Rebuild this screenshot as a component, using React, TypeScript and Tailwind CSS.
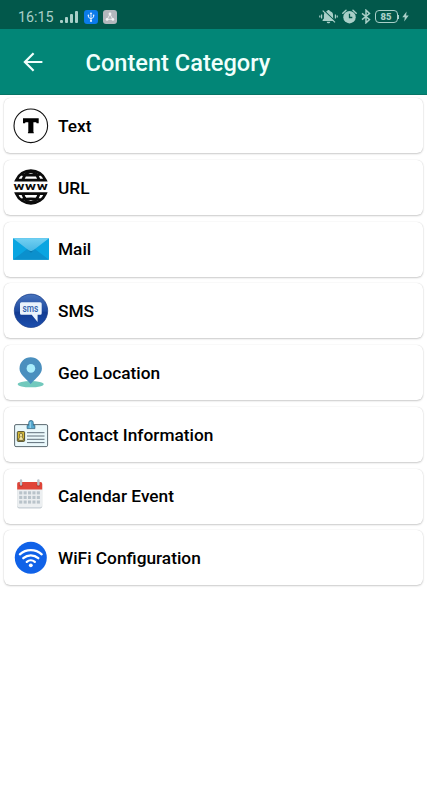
import type { ReactNode } from "react";
import { clsx } from "clsx";

const TextIcon = () => (
    <svg viewBox="0 0 36 36" className="h-9 w-9">
        <circle cx="17.8" cy="17.8" r="16.8" fill="#fff" stroke="#111" strokeWidth="1.1" />
        <path d="M10 10.3h15.700v4.900h-2.100l-.4-.900h-2.800v9.800l.4.300v.9h-5.900v-.9l.4-.300v-9.800h-2.800l-.4.900H10z" fill="#000" />
    </svg>
);

const UrlIcon = () => (
    <svg viewBox="0 0 36 36" className="h-9 w-9">
        <g fill="none" stroke="#0b0b0b" strokeWidth="2.8">
            <path d="M3.300 11.200a15.900 15.900 0 0 1 29.200 0z" />
            <path d="M9.600 11.200C11.600 5.500 14.500 2.600 17.900 2.600s6.300 2.900 8.300 8.600M8.500 5.400c6.200 1 12.600 1 18.800 0" />
            <path d="M3.300 24.700a15.900 15.900 0 0 0 29.200 0z" />
            <path d="M9.600 24.700c2 5.700 4.900 8.700 8.300 8.700s6.300-3 8.300-8.700M8.500 30.600c6.200-1 12.600-1 18.800 0" />
        </g>
        <text
            x="0.6"
            y="20.9"
            textLength="34.6"
            lengthAdjust="spacingAndGlyphs"
            fontSize="10.5"
            fontWeight="700"
            letterSpacing="0.4"
            fill="#0b0b0b"
            className="font-[Roboto,sans-serif]"
        >
            www
        </text>
    </svg>
);

const MailIcon = () => (
    <svg viewBox="0 0 36 36" className="h-9 w-9">
        <defs>
            <linearGradient id="mailFlap" x1="0" y1="0" x2="0" y2="1">
                <stop offset="0" stopColor="#72d0f2" />
                <stop offset="1" stopColor="#46b6e4" />
            </linearGradient>
        </defs>
        <path d="M0 7.3h36v21.500H0z" fill="#0aa5e1" />
        <path d="M0 28.800 18 15l18 13.800z" fill="#0b90cd" />
        <path d="M0 7.300h36L20 19.400q-2 1.600-4 0z" fill="url(#mailFlap)" />
        <path d="M14.400 18.200 16 19.400q2 1.600 4 0l1.600-1.200-3.600 3.600z" fill="#0876ad" />
    </svg>
);

const SmsIcon = () => (
    <svg viewBox="0 0 36 36" className="h-9 w-9">
        <defs>
            <linearGradient id="smsBall" x1="0" y1="0" x2="0" y2="1">
                <stop offset="0" stopColor="#4874bd" />
                <stop offset="0.5" stopColor="#1e4aa0" />
                <stop offset="0.55" stopColor="#123b92" />
                <stop offset="1" stopColor="#1c4fae" />
            </linearGradient>
        </defs>
        <circle cx="18" cy="17.8" r="16.7" fill="url(#smsBall)" stroke="#153a86" strokeWidth="0.7" />
        <path d="M8.5 9.3h18.700q1.500 0 1.500 1.500v9.400q0 1.500-1.500 1.500h-2.600v7.300l-5.900-7.300H8.500q-1.500 0-1.500-1.500v-9.400q0-1.500 1.500-1.500z" fill="#eaf3fc" />
        <text
            x="9.4"
            y="18.8"
            textLength="15.8"
            lengthAdjust="spacingAndGlyphs"
            fontSize="10.5"
            fill="#2f5fac"
            className="font-[Roboto,sans-serif] font-medium"
        >
            sms
        </text>
    </svg>
);

const GeoIcon = () => (
    <svg viewBox="0 0 36 36" className="h-9 w-9">
        <ellipse cx="17.7" cy="29.2" rx="13" ry="3.1" fill="#72c9bd" />
        <path d="M17.7 2.3a11.200 11.200 0 0 1 11.200 11.200c0 5.500-5 8.800-11.200 15.400C11.500 22.300 6.500 19 6.500 13.500A11.200 11.200 0 0 1 17.700 2.300z" fill="#4a8fbe" />
        <circle cx="17.9" cy="13.4" r="4.3" fill="#a9edfb" />
    </svg>
);

const ContactIcon = () => (
    <svg viewBox="0 0 36 36" className="h-9 w-9">
        <rect x="1.6" y="8.6" width="33" height="22" rx="1.4" fill="#eaf8fb" stroke="#4c5a62" strokeWidth="0.9" />
        <path d="M14.100 12.600v-3.200h1.600V6.700a2.300 2.300 0 0 1 4.600 0v2.700h1.600v3.200z" fill="#55a9d0" stroke="#28607e" strokeWidth="0.7" />
        <path d="M17.200 6v6" stroke="#b5e4f5" strokeWidth="0.9" />
        <rect x="4.3" y="15.6" width="7.3" height="9.8" rx="0.8" fill="#d5b936" stroke="#413d22" strokeWidth="0.9" />
        <path d="M5.600 24.400c0-2.500 1-3 1.500-3.300-1.200-2.500-.3-4 .9-4s2.100 1.500.9 4c.5.300 1.500.800 1.500 3.300z" fill="#f6e7a0" stroke="#413d22" strokeWidth="0.7" />
        <path d="M14 16.700h17.500M14 20h17.500M14 23.300h17.500M14 26.600h17.500" stroke="#50606b" strokeWidth="0.9" />
    </svg>
);

const CALENDAR_COLS = [6.2, 10.6, 15, 19.4, 23.8];
const CALENDAR_ROWS = [14.9, 19.5, 24.1];

const CalendarIcon = () => (
    <svg viewBox="0 0 36 36" className="h-9 w-9">
        <rect x="4.2" y="4" width="25" height="26.4" rx="1.8" fill="#c5cdd3" />
        <rect x="4.2" y="4" width="25" height="25.3" rx="1.8" fill="#eceff1" />
        <path d="M4.200 11.400V5.800Q4.200 4 6 4h21.400q1.800 0 1.800 1.800v5.600z" fill="#e04438" />
        {CALENDAR_ROWS.map((y) =>
            CALENDAR_COLS.map((x) => (
                <rect key={`${x}-${y}`} x={x} y={y - 1.6} width="3.1" height="3.1" fill="#b9c3ca" />
            ))
        )}
        <circle cx="8" cy="6.8" r="1.9" fill="#b83229" />
        <circle cx="25.4" cy="6.8" r="1.9" fill="#b83229" />
        <rect x="6.8" y="1.2" width="2.4" height="6.4" rx="1.2" fill="#b9c3ca" />
        <rect x="24.2" y="1.2" width="2.4" height="6.4" rx="1.2" fill="#b9c3ca" />
    </svg>
);

const WifiIcon = () => (
    <svg viewBox="0 0 36 36" className="h-9 w-9">
        <circle cx="17.8" cy="17.8" r="16" fill="#1062e8" />
        <g fill="none" stroke="#fff" strokeWidth="2.3" strokeLinecap="round">
            <path d="M6.900 14.300c6.200-5.500 15.600-5.500 21.800 0" />
            <path d="M10.300 18.200c4.300-3.800 10.700-3.800 15 0" />
            <path d="M13.800 21.900c2.300-2 5.700-2 8 0" />
        </g>
        <circle cx="17.8" cy="25.3" r="1.9" fill="#fff" />
    </svg>
);

const categories: { title: string; icon: ReactNode }[] = [
    { title: "Text", icon: <TextIcon /> },
    { title: "URL", icon: <UrlIcon /> },
    { title: "Mail", icon: <MailIcon /> },
    { title: "SMS", icon: <SmsIcon /> },
    { title: "Geo Location", icon: <GeoIcon /> },
    { title: "Contact Information", icon: <ContactIcon /> },
    { title: "Calendar Event", icon: <CalendarIcon /> },
    { title: "WiFi Configuration", icon: <WifiIcon /> },
];

const signalBars = ["h-[3px]", "h-[6px]", "h-[9px]", "h-[12px]"];

function StatusBar() {
    return (
        <div className="flex h-[28.5px] items-center bg-[#02584b] pt-[5px] text-[#a9cfc8]">
            <span className="ml-[18px] w-[37px] pt-px text-[14.3px] leading-none">16:15</span>
            <div className="ml-[5px] flex h-3 items-end gap-[2px]">
                {signalBars.map((height) => (
                    <div key={height} className={clsx("w-[3px] rounded-[1px] bg-[#a9cfc8]", height)} />
                ))}
            </div>
            <svg viewBox="0 0 14 14" className="ml-[6px] h-[14px] w-[14px]">
                <rect width="14" height="14" rx="3" fill="#0b7bea" />
                <path d="M7 3v7.500M4.400 5.500v1.700L7 8.900l2.600-1.700V5.500" fill="none" stroke="#e3f1ff" strokeWidth="1" />
                <path d="M7 1.900 8.300 4H5.700z" fill="#e3f1ff" />
                <circle cx="7" cy="10.9" r="1.1" fill="#e3f1ff" />
                <circle cx="4.4" cy="5.4" r="0.8" fill="#e3f1ff" />
                <path d="M8.900 4.600h1.400V6H8.900z" fill="#e3f1ff" />
            </svg>
            <svg viewBox="0 0 14 14" className="ml-[4.5px] h-[14px] w-[14px]">
                <rect width="14" height="14" rx="3" fill="#b3b8bd" />
                <path d="M7 4.300 4.200 9.300h5.600z" fill="none" stroke="#f2f4f5" strokeWidth="0.8" />
                <circle cx="7" cy="4" r="1.4" fill="#f2f4f5" />
                <circle cx="4.1" cy="9.4" r="1.4" fill="#f2f4f5" />
                <circle cx="9.9" cy="9.4" r="1.4" fill="#f2f4f5" />
            </svg>
            <div className="ml-auto flex items-center">
                {/* muted bell */}
                <svg viewBox="0 0 19 15" className="h-[15px] w-[19px]">
                    <path d="M9.500 1c.8 0 1.200.5 1.300 1.100 2.200.6 3.300 2.200 3.300 4.400v3.100l1.300 1.500v.9H3.600v-.9l1.300-1.500V6.500c0-2.200 1.100-3.800 3.300-4.400C8.300 1.500 8.700 1 9.500 1zM7.700 12.700h3.600c-.2 1-.9 1.500-1.800 1.500s-1.600-.5-1.800-1.500z" fill="#a9cfc8" />
                    <path d="M4.700 1.300 16.800 12.900" stroke="#02584b" strokeWidth="1.2" />
                    <path d="M3.700 1.600 16 13.400" stroke="#a9cfc8" strokeWidth="1.2" />
                    <path d="M2.600 5.500v4M.8 6.600v1.800M16.400 5.500v4M18.200 6.600v1.800" stroke="#a9cfc8" strokeWidth="1.2" />
                </svg>
                {/* alarm clock */}
                <svg viewBox="0 0 15 15" className="ml-[4.5px] h-[15px] w-[15px]">
                    <circle cx="7.5" cy="8.2" r="6.2" fill="#a9cfc8" />
                    <path d="M.8 4.200 4 1.300M14.200 4.200 11 1.300" stroke="#a9cfc8" strokeWidth="1.5" strokeLinecap="round" />
                    <path d="M7.500 4.800v3.700h2.800" fill="none" stroke="#02584b" strokeWidth="1.3" />
                </svg>
                <svg viewBox="0 0 10 15" className="ml-[3.5px] h-[15px] w-[10px]">
                    <path d="M1 4.300 8.500 10.500 5 13.800V1.200l3.500 3.300L1 10.700" fill="none" stroke="#a9cfc8" strokeWidth="1.5" />
                </svg>
                <div className="ml-[4px] flex h-[13px] w-[23px] items-center justify-center rounded-[4px] border border-[#a9cfc8] text-[9.5px] leading-none font-black">
                    85
                </div>
                <div className="h-1 w-[1.5px] bg-[#a9cfc8]" />
                <svg viewBox="0 0 7 11" className="mr-[18px] ml-[3px] h-[11px] w-[7px]">
                    <path d="M4.600.5.300 6.200h2.500L2.200 10.500l4.500-6H4.100z" fill="#a9cfc8" />
                </svg>
            </div>
        </div>
    );
}

export default function App() {
    return (
        <div className="h-[800px] w-[427px] overflow-hidden bg-white font-[Roboto,sans-serif]">
            <StatusBar />
            <div className="flex h-[66.5px] items-center border-b border-[#067465] bg-[#028677] text-white">
                <button className="ml-[23px] pt-px" aria-label="Back">
                    <svg viewBox="0 0 20 20" className="h-5 w-5">
                        <path d="M19.400 10H2.200M10.600 1.300 1.900 10l8.700 8.700" fill="none" stroke="#f0fffc" strokeWidth="2.2" />
                    </svg>
                </button>
                <h1 className="ml-[42.5px] pt-[5px] text-[23.6px] leading-none font-medium text-[#f0fffc]">Content Category</h1>
            </div>
            <div className="flex flex-col gap-[6.75px] px-[4px] pt-[3px]">
                {categories.map((category) => (
                    <div
                        key={category.title}
                        className="flex h-[55px] items-center rounded-[6px] bg-white pl-[9px] shadow-[0_1px_2px_rgba(0,0,0,0.2),0_0_1px_rgba(0,0,0,0.16)]"
                    >
                        {category.icon}
                        <p className="ml-[9px] pt-[2px] text-[17.3px] leading-none font-medium text-black">{category.title}</p>
                    </div>
                ))}
            </div>
        </div>
    );
}
